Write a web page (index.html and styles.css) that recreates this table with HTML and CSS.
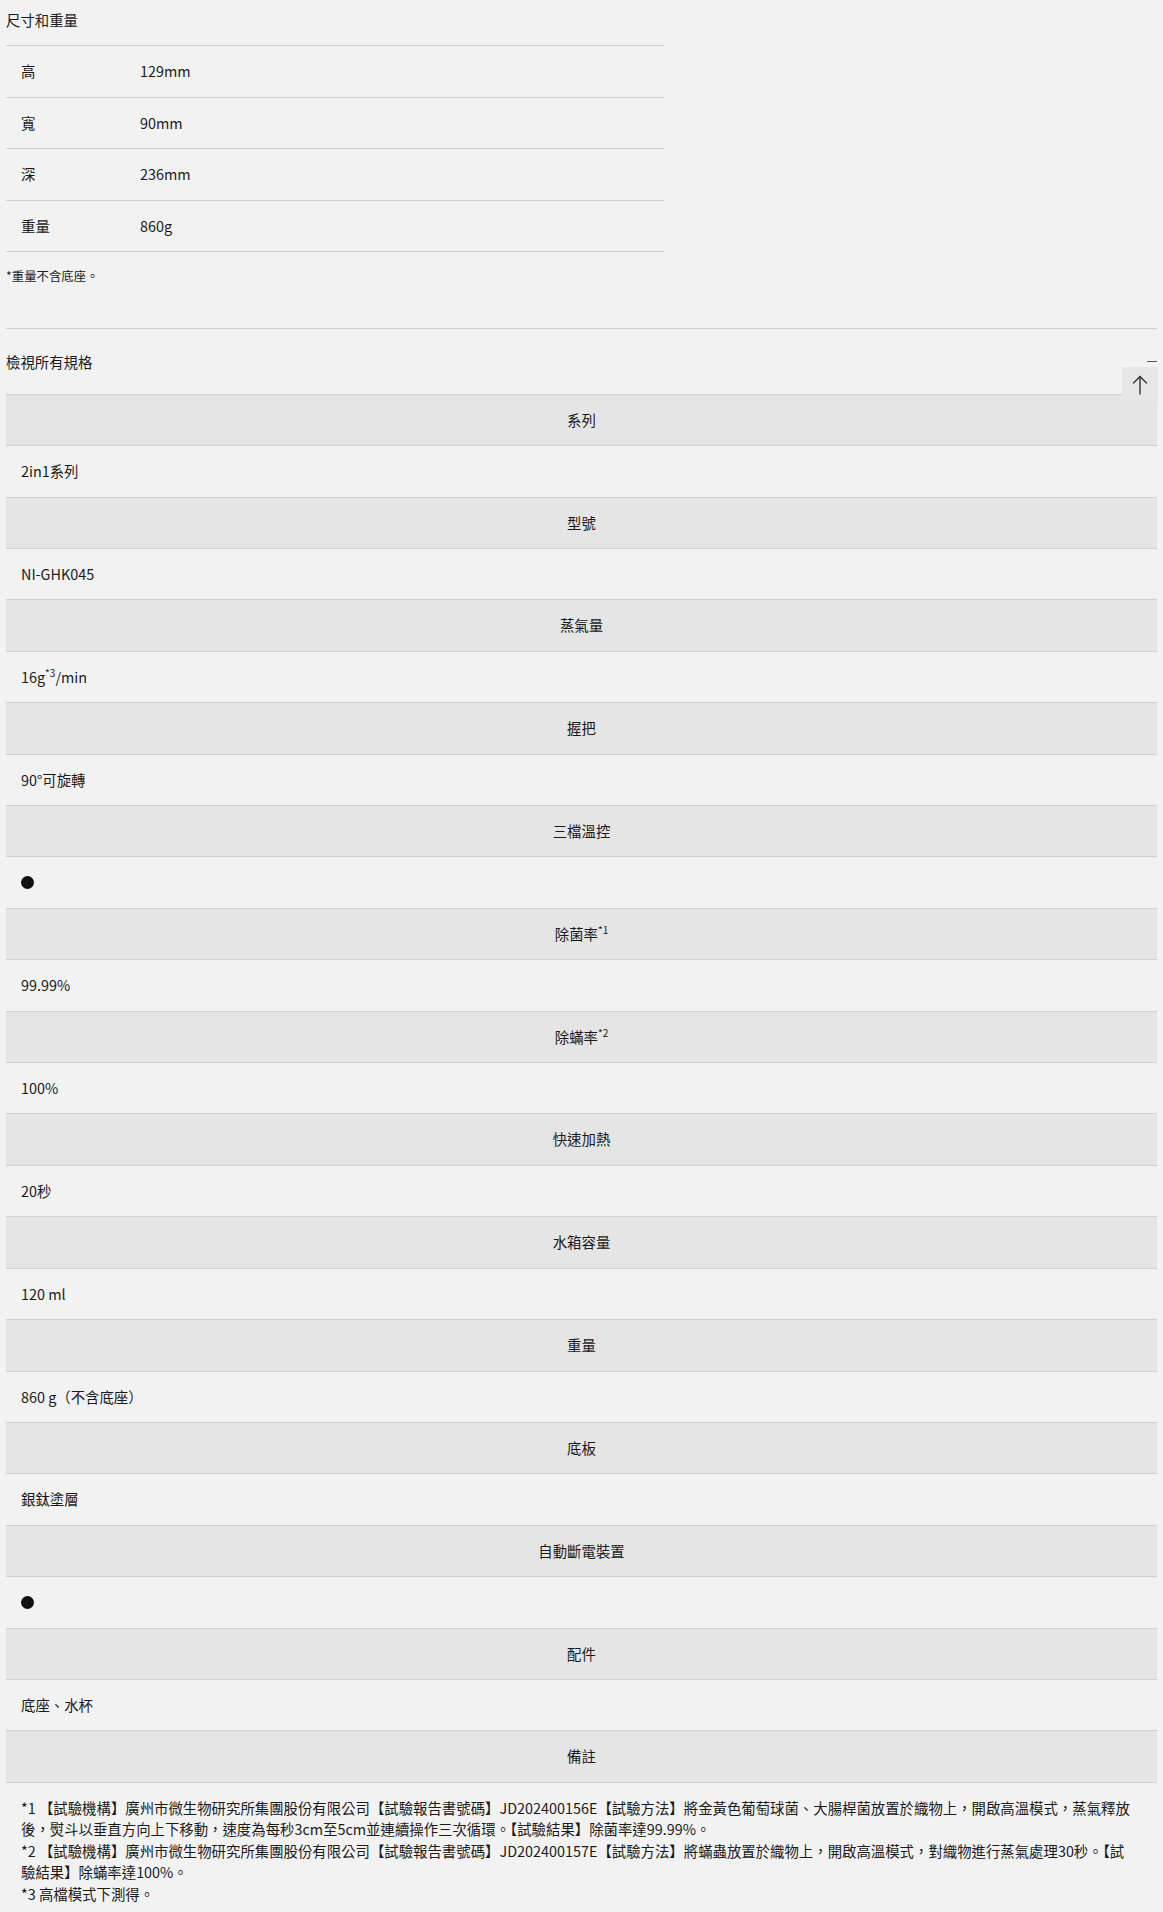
FILE: index.html
```html
<!DOCTYPE html>
<html lang="zh-Hant">
<head>
<meta charset="utf-8">
<title>規格</title>
<link rel="stylesheet" href="styles.css">
</head>
<body>
<div class="page">
  <section class="dims">
    <h2 class="dims-title">尺寸和重量</h2>
    <div class="dims-table">
      <div class="dims-row"><span class="dims-label">高</span><span class="dims-value">129mm</span></div>
      <div class="dims-row"><span class="dims-label">寬</span><span class="dims-value">90mm</span></div>
      <div class="dims-row"><span class="dims-label">深</span><span class="dims-value">236mm</span></div>
      <div class="dims-row"><span class="dims-label">重量</span><span class="dims-value">860g</span></div>
    </div>
    <p class="dims-note">*重量不含底座。</p>
  </section>

  <section class="specs">
    <div class="specs-head">
      <span class="specs-title">檢視所有規格</span>
      <span class="specs-toggle"></span>
    </div>
    <div class="spec-list">
      <div class="spec-h">系列</div>
      <div class="spec-v">2in1系列</div>
      <div class="spec-h">型號</div>
      <div class="spec-v">NI-GHK045</div>
      <div class="spec-h">蒸氣量</div>
      <div class="spec-v">16g<sup>*3</sup>/min</div>
      <div class="spec-h">握把</div>
      <div class="spec-v">90°可旋轉</div>
      <div class="spec-h">三檔溫控</div>
      <div class="spec-v"><span class="dot"></span></div>
      <div class="spec-h">除菌率<sup>*1</sup></div>
      <div class="spec-v">99.99%</div>
      <div class="spec-h">除蟎率<sup>*2</sup></div>
      <div class="spec-v">100%</div>
      <div class="spec-h">快速加熱</div>
      <div class="spec-v">20秒</div>
      <div class="spec-h">水箱容量</div>
      <div class="spec-v">120 ml</div>
      <div class="spec-h">重量</div>
      <div class="spec-v">860 g（不含底座）</div>
      <div class="spec-h">底板</div>
      <div class="spec-v">銀鈦塗層</div>
      <div class="spec-h">自動斷電裝置</div>
      <div class="spec-v"><span class="dot"></span></div>
      <div class="spec-h">配件</div>
      <div class="spec-v">底座、水杯</div>
      <div class="spec-h">備註</div>
      <div class="spec-notes">
        <p>*1 【試驗機構】廣州市微生物研究所集團股份有限公司【試驗報告書號碼】JD202400156E【試驗方法】將金黃色葡萄球菌、大腸桿菌放置於織物上，開啟高溫模式，蒸氣釋放後，熨斗以垂直方向上下移動，速度為每秒3cm至5cm並連續操作三次循環。【試驗結果】除菌率達99.99%。</p>
        <p>*2 【試驗機構】廣州市微生物研究所集團股份有限公司【試驗報告書號碼】JD202400157E【試驗方法】將蟎蟲放置於織物上，開啟高溫模式，對織物進行蒸氣處理30秒。【試驗結果】除蟎率達100%。</p>
        <p>*3 高檔模式下測得。</p>
      </div>
    </div>
  </section>
</div>

<button class="to-top" aria-label="回到頂部">
  <svg width="16" height="20" viewBox="0 0 16 20" fill="none" stroke="#333" stroke-width="1.4" stroke-linecap="round" stroke-linejoin="round">
    <path d="M8 1.5V19"/>
    <path d="M1.5 8L8 1.5L14.5 8"/>
  </svg>
</button>
</body>
</html>
```

FILE: styles.css
```css
html, body {
  margin: 0;
  padding: 0;
  background: #f2f2f2;
}

body {
  font-family: "Noto Sans CJK TC", "Noto Sans", sans-serif;
  font-size: 14.4px;
  color: #1a1a1a;
}

.page {
  padding: 0 6px;
}

/* ---------- dimensions ---------- */
.dims-title {
  margin: 0;
  padding: 9px 0 14px;
  font-size: 14.4px;
  font-weight: 400;
  line-height: 22px;
  border-bottom: 1px solid #cfcfcf;
  width: 658px;
}

.dims-table {
  width: 658px;
}

.dims-row {
  display: flex;
  padding: 15px 15px;
  line-height: 20.5px;
  border-bottom: 1px solid #cfcfcf;
}

.dims-label {
  width: 119px;
  flex: none;
}

.dims-note {
  margin: 0;
  padding: 15px 0 42.8px;
  font-size: 12.4px;
  line-height: 18px;
  border-bottom: 1px solid #cfcfcf;
}

/* ---------- specs ---------- */
.specs-head {
  display: flex;
  justify-content: space-between;
  align-items: center;
  height: 65px;
}

.specs-title {
  line-height: 22px;
  padding-top: 1px;
}

.specs-toggle {
  width: 10px;
  height: 1.5px;
  background: #555;
  margin-top: 0;
}

.spec-h,
.spec-v {
  border-top: 1px solid #cfcfcf;
  padding: 15px 15px;
  line-height: 20.4px;
}

.spec-h {
  background: #e5e5e5;
  text-align: center;
}

.spec-v {
  background: #f2f2f2;
}

sup {
  font-size: 0.7em;
  line-height: 0;
  vertical-align: 0.6em;
}

.dot {
  display: inline-block;
  width: 13px;
  height: 13px;
  border-radius: 50%;
  background: #111;
  vertical-align: -1px;
}

.spec-notes {
  border-top: 1px solid #cfcfcf;
  padding: 14px 15px 8px;
  line-height: 21.5px;
}

.spec-notes p {
  margin: 0;
  max-width: 1116px;
}

/* ---------- back to top ---------- */
.to-top {
  position: absolute;
  top: 367px;
  left: 1122px;
  width: 36px;
  height: 36px;
  border: 0;
  padding: 0;
  background: #e6e6e6;
  display: flex;
  align-items: center;
  justify-content: center;
  cursor: pointer;
}
```
